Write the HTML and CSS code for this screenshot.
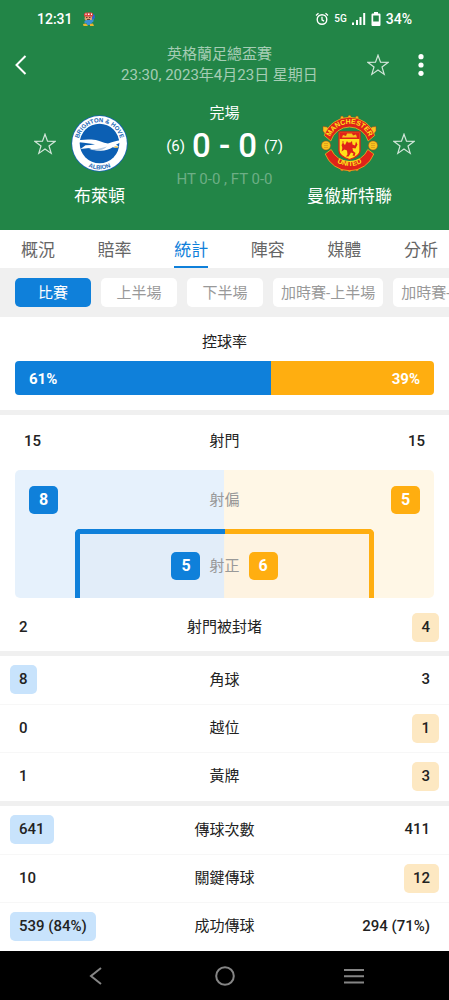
FILE: index.html
```html
<!DOCTYPE html>
<html lang="zh-Hant">
  <head>
    <meta charset="UTF-8" />
    <meta name="viewport" content="width=device-width, initial-scale=1.0" />
    <title>布萊頓 - 曼徹斯特聯</title>
    <link rel="stylesheet" href="styles.css">
  </head>
  <body>
    <svg class="defs" aria-hidden="true">
      <symbol id="star" viewBox="0 0 22 22">
        <path d="M11 1.2 13.5 8.2 21 8.4 15 13 17.2 20.4 11 16.1 4.8 20.4 7 13 1 8.4 8.5 8.2Z" fill="none" stroke="currentColor" stroke-width="1.2" />
      </symbol>
    </svg>

    <header>
      <div class="status">
        <span class="clock">12:31</span>
        <svg class="avatar" viewBox="0 0 14 15" width="14" height="15" aria-hidden="true">
          <path d="M10 2.500h2.500l.5 3-1.500 2.500-1.500-1Z" fill="#2c66c8" />
          <path d="M3 4h7v4H8l-1 1H4L2.500 7Z" fill="#e0a070" />
          <path d="M2 2 3.500.500h6l1.500 1v3H2Z" fill="#d9433f" />
          <path d="M3.500 1.500h1v1.500h-1zM6 1.500h1.500v1.500H6zM9 1.500h1v1.500H9z" fill="#fff" />
          <path d="M4 5h1.500v1H4zM7 5h1.500v1H7zM5 7h3v1H5z" fill="#693e35" />
          <path d="M2.500 9 5 8h4l2.500-1v2.500L9.500 11v2h-5v-2l-2 .5Z" fill="#3d8fd6" />
          <path d="M1 12 4 11.500 6 14H1.500ZM8 12l3-.5 1 2.500H8Z" fill="#e9b62c" />
        </svg>
        <div class="signals">
          <svg viewBox="0 0 14 14" width="14" height="14" aria-hidden="true" fill="none" stroke="#fff">
            <circle cx="7" cy="7.500" r="4.800" stroke-width="1.400" />
            <path d="M1 3.500 3.500 1.200M13 3.500 10.500 1.200M7 4.800v3l2 1.300" stroke-width="1.300" />
          </svg>
          <span class="net">5G</span>
          <svg viewBox="0 0 14 12" width="14" height="12" aria-hidden="true" fill="#fff">
            <path d="M0 9.500h2V12H0zM4 7h2v5H4zM7.500 4h2v8h-2zM11.200 0h2v12h-2z" />
          </svg>
          <svg viewBox="0 0 10 14" width="10" height="14" aria-hidden="true" fill="#fff">
            <path fill-rule="evenodd" d="M3 0h4v1.500h1.500q1 0 1 1V13q0 1-1 1h-7q-1 0-1-1V2.500q0-1 1-1H3ZM2.200 3.500v6h5.600v-6Z" />
          </svg>
          <span>34%</span>
        </div>
      </div>

      <div class="appbar">
        <button type="button" aria-label="返回">
          <svg viewBox="0 0 12 20" width="12" height="20" fill="none" stroke="#fff" stroke-width="2">
            <path d="M10.500 1 1.500 10l9 9" />
          </svg>
        </button>
        <p class="league">英格蘭足總盃賽<br />23:30, 2023年4月23日 星期日</p>
        <div class="actions">
          <button type="button" aria-label="收藏比賽">
            <svg class="star" width="22" height="22"><use href="#star" /></svg>
          </button>
          <button type="button" aria-label="更多">
            <svg viewBox="0 0 6 22" width="6" height="22" fill="#fff">
              <circle cx="3" cy="2.700" r="2.600" />
              <circle cx="3" cy="11" r="2.600" />
              <circle cx="3" cy="19.300" r="2.600" />
            </svg>
          </button>
        </div>
      </div>

      <section class="match">
        <button class="fav" type="button" aria-label="收藏布萊頓">
          <svg class="star" width="22" height="22"><use href="#star" /></svg>
        </button>
        <div class="team">
          <svg viewBox="0 0 57 57" width="57" height="57" role="img" aria-label="Brighton &amp; Hove Albion">
            <defs>
              <path id="bhTop" d="M7.200 28.500a21.300 21.300 0 0 1 42.600 0" />
              <path id="bhBottom" d="M2.700 28.500a25.800 25.800 0 0 0 51.600 0" />
            </defs>
            <circle cx="28.500" cy="28.500" r="28.200" fill="#1765b5" />
            <circle cx="28.500" cy="28.500" r="27.400" fill="#fff" />
            <circle cx="28.500" cy="28.500" r="19.800" fill="#0c5fb3" />
            <path d="M1.500 26.500Q10 24.800 17 24.600q7-.8 12 1.600 4.500 2 8 2.300Q46 25 56 24.800q-6 2-11 5 2.500.7 2.700 2.200-2.700 1.200-6 .3-5 3.400-12 3.400-7 0-11.500-2.600l-8.700 1 5-3.800Q20 30 24 29.200 13 27.500 1.500 26.500Z" fill="#fff" />
            <path d="M17 33.500q7 1 11 0 5-1 8-2-4 4-10 4-5 0-9-2Z" fill="#b8cde4" />
            <path d="m43.500 31.300 3.500.2-.5 1.500-3-.5Z" fill="#e8b83a" />
            <g class="crest-text crest-blue">
              <text><textPath href="#bhTop" startOffset="50%">BRIGHTON &amp; HOVE</textPath></text>
              <text><textPath href="#bhBottom" startOffset="50%">ALBION</textPath></text>
            </g>
          </svg>
          <h2>布萊頓</h2>
        </div>
        <div class="result">
          <p>完場</p>
          <p class="score"><span>(6)</span><strong>0 - 0</strong><span>(7)</span></p>
          <p class="halves">HT 0-0 , FT 0-0</p>
        </div>
        <div class="team">
          <svg viewBox="0 0 57 57" width="57" height="57" role="img" aria-label="Manchester United">
            <defs>
              <path id="muTop" d="M8 26a20.800 20.800 0 0 1 41 0" />
              <path id="muBottom" d="M4.500 33a25 25 0 0 0 48 0" />
            </defs>
            <g fill="#f7c51e" stroke="#b03a18" stroke-width=".5">
              <circle cx="21" cy="2.500" r="1.400" /><circle cx="28.500" cy="1.700" r="1.500" /><circle cx="36" cy="2.500" r="1.400" />
              <circle cx="21" cy="54.500" r="1.400" /><circle cx="28.500" cy="55.300" r="1.500" /><circle cx="36" cy="54.500" r="1.400" />
              <path d="M2 16V11.500l4 .5 3 3-4 5ZM55 16v-4.500l-4 .5-3 3 4 5Z" />
              <circle cx="5" cy="30.500" r="4.600" /><circle cx="52" cy="30.500" r="4.600" />
            </g>
            <path d="M3 28.500h4M3 30.500h4M3 32.500h4M50 28.500h4M50 30.500h4M50 32.500h4" stroke="#d98f1c" stroke-width=".7" />
            <path d="M3.300 20.500a26.500 26.500 0 0 1 50.400 0l-6.500 5.500a19.500 19.500 0 0 0-37.400 0Z" fill="#df2219" stroke="#f7c51e" stroke-width=".7" />
            <path d="M4.200 39a26 26 0 0 0 48.600 0l-6-4.500a20 20 0 0 1-36.600 0Z" fill="#df2219" stroke="#f7c51e" stroke-width=".7" />
            <path d="M18 17h21v19q0 5-10.500 8.500Q18 41 18 36Z" fill="#ffe11a" stroke="#df2219" stroke-width="1.300" />
            <path d="M18.500 17.500h20V24h-20Z" fill="#df2219" />
            <path d="M21 22.500 22 20l3 1 1-2.500h5l1 2 3-1 1 3Z" fill="#f7c51e" />
            <path d="m26 26 1 1.500h2.500L31 26l.5 3.500 2.500 1 1-4 1.500 3-2 4-3-.5.500 3 2.500 2-1 3-2-.5 1-2-2.500-1-1.500 2.500-1 1.500h-2.500l1.500-2-.5-4-2.500-1-3 2 1-3.500-1-3 1.500-2 2 2Z" fill="#df2219" />
            <path d="M22 26v9" stroke="#df2219" stroke-width=".8" />
            <g class="crest-text crest-gold">
              <text><textPath href="#muTop" startOffset="50%">MANCHESTER</textPath></text>
              <text><textPath href="#muBottom" startOffset="50%">UNITED</textPath></text>
            </g>
          </svg>
          <h2>曼徹斯特聯</h2>
        </div>
        <button class="fav" type="button" aria-label="收藏曼徹斯特聯">
          <svg class="star" width="22" height="22"><use href="#star" /></svg>
        </button>
      </section>
    </header>

    <nav class="tabs">
      <a href="#overview">概況</a>
      <a href="#odds">賠率</a>
      <a href="#stats" class="active" aria-current="page">統計</a>
      <a href="#lineups">陣容</a>
      <a href="#media">媒體</a>
      <a href="#analysis">分析</a>
    </nav>

    <div class="periods">
      <button type="button" class="selected" aria-pressed="true">比賽</button>
      <button type="button">上半場</button>
      <button type="button">下半場</button>
      <button type="button">加時賽-上半場</button>
      <button type="button">加時賽-下半場</button>
    </div>

    <main id="stats">
      <section class="possession">
        <h3>控球率</h3>
        <div class="bar">
          <span class="home" style="width: 61%">61%</span>
          <span class="away" style="width: 39%">39%</span>
        </div>
      </section>

      <section class="shots">
        <div class="total">
          <span>15</span>
          <h3>射門</h3>
          <span>15</span>
        </div>
        <div class="pitch">
          <div class="off-target">
            <span class="badge home">8</span>
            <span>射偏</span>
            <span class="badge away">5</span>
          </div>
          <div class="goal">
            <span class="badge home">5</span>
            <span>射正</span>
            <span class="badge away">6</span>
          </div>
        </div>
        <table>
          <tr>
            <td><span>2</span></td>
            <th scope="row">射門被封堵</th>
            <td><span class="lead">4</span></td>
          </tr>
        </table>
      </section>

      <section class="group">
        <table>
          <tr>
            <td><span class="lead">8</span></td>
            <th scope="row">角球</th>
            <td><span>3</span></td>
          </tr>
          <tr>
            <td><span>0</span></td>
            <th scope="row">越位</th>
            <td><span class="lead">1</span></td>
          </tr>
          <tr>
            <td><span>1</span></td>
            <th scope="row">黃牌</th>
            <td><span class="lead">3</span></td>
          </tr>
        </table>
      </section>

      <section class="group">
        <table>
          <tr>
            <td><span class="lead">641</span></td>
            <th scope="row">傳球次數</th>
            <td><span>411</span></td>
          </tr>
          <tr>
            <td><span>10</span></td>
            <th scope="row">關鍵傳球</th>
            <td><span class="lead">12</span></td>
          </tr>
          <tr>
            <td><span class="lead">539 (84%)</span></td>
            <th scope="row">成功傳球</th>
            <td><span>294 (71%)</span></td>
          </tr>
        </table>
      </section>
    </main>

    <footer>
      <button type="button" aria-label="上一頁">
        <svg viewBox="0 0 24 24" width="24" height="24"><path d="M17 4 7 12l10 8" /></svg>
      </button>
      <button type="button" aria-label="主畫面">
        <svg viewBox="0 0 24 24" width="24" height="24"><circle cx="12" cy="12" r="8.800" /></svg>
      </button>
      <button type="button" aria-label="最近使用">
        <svg viewBox="0 0 24 24" width="24" height="24"><path d="M2 6h20M2 12.300h20M2 18.600h20" /></svg>
      </button>
    </footer>
  </body>
</html>
```

FILE: styles.css
```css
/* Global styles */
*,
*::before,
*::after {
  margin: 0;
  padding: 0;
  box-sizing: border-box;
}
body {
  display: flex;
  flex-direction: column;
  min-height: 100vh;
  overflow-x: hidden;
  color: #222;
  background: #fff;
  font: 400 15px/20px Roboto, "Noto Sans CJK TC", sans-serif;
}
button {
  border: none;
  font: inherit;
  color: inherit;
  background: none;
  cursor: pointer;
}
a {
  color: inherit;
  text-decoration: none;
}
h2,
h3 {
  font-size: inherit;
  font-weight: 400;
}
svg {
  display: block;
  flex: none;
}
.defs {
  display: none;
}

/*
  [1] Header
*/
header {
  color: #fff;
  padding-bottom: 22px;
  background: #228547;
}
.status {
  gap: 9px;
  height: 38px;
  display: flex;
  align-items: center;
  padding: 0 37px;
  font-size: 14px;
  font-weight: 500;
}
.signals {
  gap: 5px;
  display: flex;
  margin-left: auto;
  align-items: center;
}
.net {
  font-size: 10px;
}
.appbar {
  display: grid;
  padding: 6px 25px 0 15px;
  align-items: center;
  grid-template-columns: 60px 1fr 60px;
}
.league {
  line-height: 21px;
  text-align: center;
  white-space: nowrap;
  justify-self: center;
  color: rgb(255 255 255 / 60%);
}
.actions {
  gap: 29px;
  display: flex;
  justify-content: flex-end;
}
.star {
  color: rgb(255 255 255 / 80%);
}
.match {
  display: flex;
  padding: 17px 34px 0;
  align-items: flex-start;
}
.fav {
  height: 82px;
}
.team {
  width: 87px;
  display: flex;
  padding-top: 12px;
  align-items: center;
  flex-direction: column;
}
.team h2 {
  font-size: 17px;
  line-height: 24px;
  margin-top: 12px;
  white-space: nowrap;
}
.result {
  flex: 1;
  text-align: center;
}
.score {
  gap: 7px;
  display: flex;
  align-items: center;
  justify-content: center;
  line-height: 46px;
}
.score strong {
  font-size: 33px;
  font-weight: 500;
}
.halves {
  color: rgb(255 255 255 / 35%);
}
.crest-text {
  font-family: "Liberation Sans", sans-serif;
  font-weight: 700;
  text-anchor: middle;
}
.crest-blue {
  fill: #1765b5;
  font-size: 6px;
}
.crest-gold {
  fill: #ffe11a;
  font-size: 7px;
}

/*
  [2] Tabs
*/
.tabs {
  display: flex;
  padding: 0 11px 0 21px;
  justify-content: space-between;
  color: #666;
  font-size: 17px;
  line-height: 41px;
}
.tabs a {
  height: 38px;
}
.tabs .active {
  color: #0f80da;
  border-bottom: 2px solid #0f80da;
}
.periods {
  gap: 10px;
  display: flex;
  overflow: hidden;
  padding: 10px 15px;
  background: #f0f0f0;
}
.periods button {
  flex: none;
  height: 29px;
  min-width: 76px;
  padding: 0 8px;
  color: #999;
  border-radius: 5px;
  background: #fff;
}
.periods .selected {
  color: #fff;
  background: #0f80da;
}

/*
  [3] Statistics
*/
main section + section {
  border-top: 5px solid #f0f0f0;
}
.home {
  background: #0f80da;
}
.away {
  background: #ffae10;
}
.possession {
  padding: 14px 15px 15px;
}
.possession h3 {
  text-align: center;
  line-height: 22px;
}
.bar {
  height: 34px;
  display: flex;
  overflow: hidden;
  margin-top: 8px;
  border-radius: 4px;
  color: #fff;
  font-weight: 700;
  line-height: 36px;
}
.bar span {
  padding: 0 14px;
}
.bar .away {
  text-align: right;
}
.total {
  display: grid;
  height: 55px;
  padding: 0 24px 4px;
  align-items: center;
  grid-template-columns: 1fr auto 1fr;
}
.total span {
  font-weight: 500;
}
.total span:last-child {
  text-align: right;
}
.pitch {
  margin: 0 15px 5px;
  overflow: hidden;
  color: #999;
  border-radius: 5px;
  background: linear-gradient(90deg, #e6f1fc 50%, #fff7e6 50%);
}
.badge {
  width: 29px;
  color: #fff;
  font-size: 16px;
  font-weight: 700;
  line-height: 28px;
  text-align: center;
  border-radius: 5px;
}
.off-target {
  display: flex;
  padding: 16px 14px 15px;
  align-items: center;
  justify-content: space-between;
}
.goal {
  gap: 9px;
  display: flex;
  height: 69px;
  margin: 0 60px;
  position: relative;
  align-items: center;
  justify-content: center;
  padding-top: 5px;
}
/* goal frame, one half for each side */
.goal::before,
.goal::after {
  content: "";
  position: absolute;
  top: 0;
  bottom: 0;
  width: 50%;
  border-top: 5px solid;
}
.goal::before {
  left: 0;
  border-left: 5px solid;
  border-color: #0f80da;
  border-top-left-radius: 5px;
  background: rgb(120 120 160 / 3%);
}
.goal::after {
  right: 0;
  border-right: 5px solid;
  border-color: #ffae10;
  border-top-right-radius: 5px;
  background: rgb(240 160 100 / 4%);
}
.goal span {
  z-index: 1;
}
table {
  width: 100%;
  table-layout: fixed;
  border-collapse: collapse;
}
tr {
  height: 48px;
}
tr + tr {
  border-top: 1px solid #f7f7f7;
}
.group {
  padding-bottom: 1px;
}
th {
  font-weight: 400;
}
td {
  font-weight: 500;
  padding: 0 10px;
}
td:last-child {
  text-align: right;
}
td span {
  display: inline-block;
  padding: 0 9px;
  border-radius: 5px;
  line-height: 29px;
}
.lead {
  background: #c8e3fc;
}
td:last-child .lead {
  background: #fde8c2;
}

/*
  [4] Navigation bar
*/
footer {
  gap: 105px;
  height: 49px;
  display: flex;
  margin-top: auto;
  align-items: center;
  justify-content: center;
  background: #000;
}
footer svg {
  fill: none;
  stroke: #858585;
  stroke-width: 2;
}
```
